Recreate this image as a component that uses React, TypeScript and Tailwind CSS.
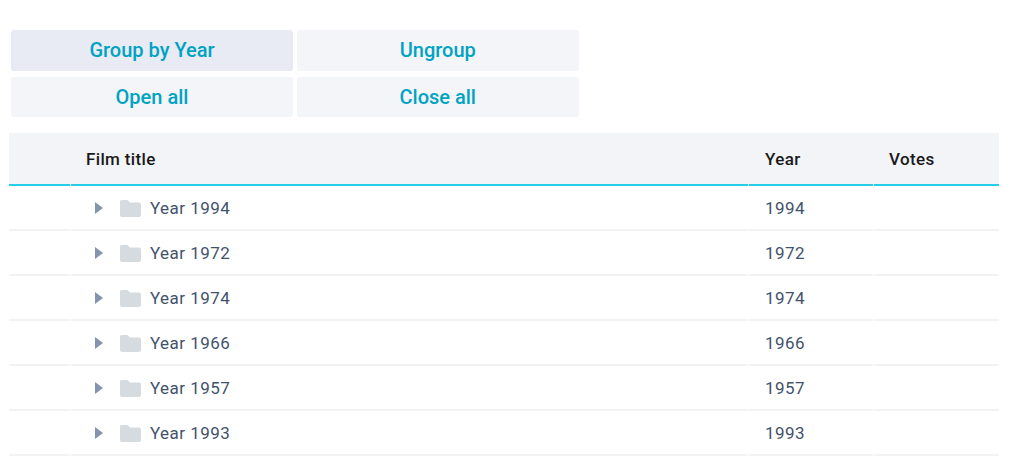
import React from 'react';

const buttons = [
  { label: 'Group by Year', active: true },
  { label: 'Ungroup', active: false },
  { label: 'Open all', active: false },
  { label: 'Close all', active: false },
];

const years = ['1994', '1972', '1974', '1966', '1957', '1993'];

const Caret = () => (
  <svg width="8" height="12" viewBox="0 0 8 12" className="block">
    <path d="M0 0 L8 6 L0 12 Z" fill="#8494ad" />
  </svg>
);

const Folder = () => (
  <svg width="21" height="17" viewBox="0 0 21 17" className="block">
    <path
      d="M1.5 0 H7.5 L10 2.5 H19 A2 2 0 0 1 21 4.5 V15 A2 2 0 0 1 19 17 H2 A2 2 0 0 1 0 15 V1.5 A1.5 1.5 0 0 1 1.5 0 Z"
      fill="#d5dbdf"
    />
  </svg>
);

export default function App() {
  return (
    <div className="h-[466px] w-[1012px] overflow-hidden bg-white font-['Roboto',sans-serif]">
      <div className="ml-[11px] grid grid-cols-[282px_281.5px] gap-x-[4px] gap-y-[6px] pt-[30px]">
        {buttons.map((b) => (
          <button
            key={b.label}
            className={`h-[40.5px] rounded-[3px] text-[20px] font-medium text-[#00a3c2] ${
              b.active ? 'bg-[#e8eaf4]' : 'bg-[#f4f5f9]'
            }`}
          >
            {b.label}
          </button>
        ))}
      </div>

      <div className="ml-[9px] mt-[16px] w-[990px]">
        <div className="flex h-[53px] gap-[1px] bg-[#f3f4f8] text-[17px] font-medium tracking-[0.35px] text-[#1a1a1a]">
          <div className="w-[61px] border-b-2 border-b-[#25cde6]" />
          <div className="flex flex-1 items-center border-b-2 border-b-[#25cde6] pl-[15px] pt-[2px]">Film title</div>
          <div className="flex w-[124px] items-center border-b-2 border-b-[#25cde6] pl-[16px] pt-[2px]">Year</div>
          <div className="flex w-[125px] items-center border-b-2 border-b-[#25cde6] pl-[15px] pt-[2px]">Votes</div>
        </div>

        {years.map((year) => (
          <div key={year} className="flex h-[45px] gap-[1px] text-[17px] tracking-[0.45px] text-[#42526b]">
            <div className="w-[61px] border-b-2 border-b-[#f1f2f4]" />
            <div className="flex flex-1 items-center border-b-2 border-b-[#f1f2f4] pl-[24px] pt-[1px]">
              <Caret />
              <span className="ml-[17px]">
                <Folder />
              </span>
              <span className="ml-[9px] pt-[1px]">Year {year}</span>
            </div>
            <div className="flex w-[124px] items-center border-b-2 border-b-[#f1f2f4] pl-[16px] pt-[2px]">{year}</div>
            <div className="w-[125px] border-b-2 border-b-[#f1f2f4]" />
          </div>
        ))}
      </div>
    </div>
  );
}
